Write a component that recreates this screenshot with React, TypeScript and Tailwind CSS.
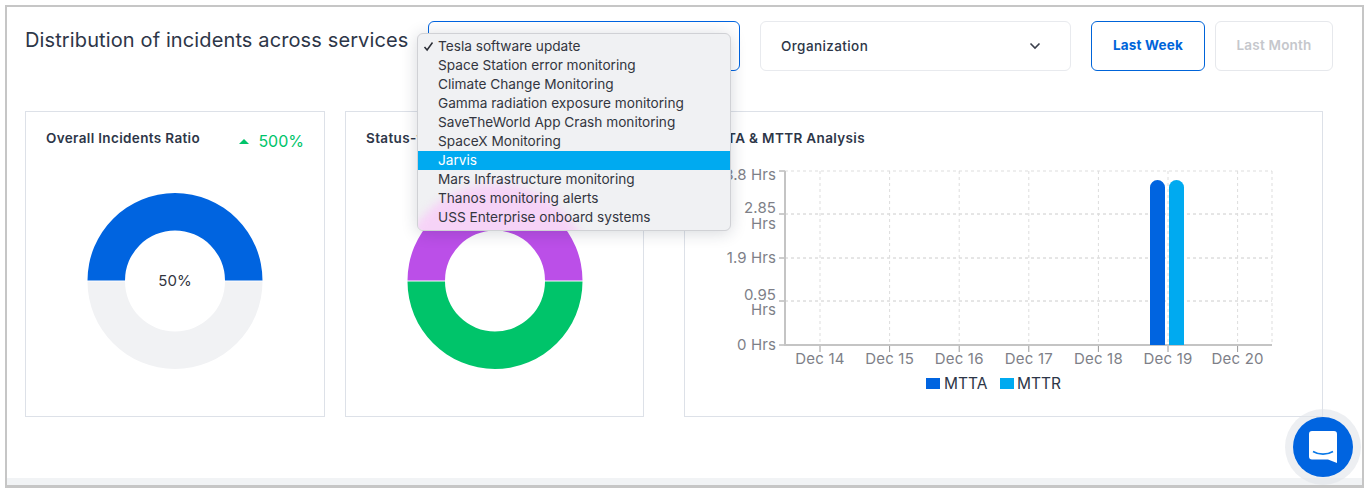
const SERVICES = [
  "Tesla software update",
  "Space Station error monitoring",
  "Climate Change Monitoring",
  "Gamma radiation exposure monitoring",
  "SaveTheWorld App Crash monitoring",
  "SpaceX Monitoring",
  "Jarvis",
  "Mars Infrastructure monitoring",
  "Thanos monitoring alerts",
  "USS Enterprise onboard systems",
];

const DAYS = ["Dec 14", "Dec 15", "Dec 16", "Dec 17", "Dec 18", "Dec 19", "Dec 20"];
const Y_LINES = [171, 214, 258, 301];
const Y_TICKS = [171, 214, 258, 301, 345];

function dayX(i: number) {
  return 820 + i * 69.6;
}

function Donut({ top, bottom }: { top: string; bottom: string }) {
  return (
    <svg width="176" height="176" viewBox="0 0 176 176" className="block">
      <path d="M0.5 87.5a87.5 87.5 0 0 1 175 0h-37.5a50 50 0 0 0-100 0z" fill={top} />
      <path d="M0.5 88.5a87.5 87.5 0 0 0 175 0h-37.5a50 50 0 0 1-100 0z" fill={bottom} />
    </svg>
  );
}

function ServiceMenu() {
  return (
    <div className="absolute left-[-12px] top-[11px] z-20 w-[314px] h-[198px] overflow-hidden rounded-[6px] border border-[#d0d1d5] bg-[#f0f1f3] pt-[3px] shadow-[0_2px_16px_rgba(30,40,60,0.18)] font-['Inter',sans-serif] text-[13.65px] text-[#33363f]">
      <div className="absolute left-[-20px] top-[150px] w-[194px] h-[194px] rounded-full bg-[#f6d3f7] blur-[4px]" />
      {SERVICES.map((name, i) => (
        <div
          key={name}
          className={`relative h-[19px] pl-[20px] leading-[19px] whitespace-nowrap ${name === "Jarvis" ? "bg-[#00aaf0] text-white" : ""}`}
        >
          {i === 0 && (
            <svg width="11" height="11" viewBox="0 0 11 11" className="absolute left-[5px] top-[4px]">
              <path d="M1.5 6l2.6 3L9.5 1.5" fill="none" stroke="#2b2e36" strokeWidth="1.5" />
            </svg>
          )}
          {name}
        </div>
      ))}
    </div>
  );
}

function Chart() {
  return (
    <svg width="637" height="250" viewBox="685 150 637 250" className="block font-['Inter',sans-serif]">
      {Y_LINES.map((y, i) => (
        <line key={y} x1="785" x2="1272" y1={y} y2={y} stroke={i === 0 ? "#dddddd" : "#cccccc"} strokeWidth="1" strokeDasharray="3 3" />
      ))}
      {DAYS.map((d, i) => (
        <line key={d} x1={dayX(i)} x2={dayX(i)} y1="171" y2="345" stroke="#dddddd" strokeWidth="1" strokeDasharray="3 3" />
      ))}
      <line x1="1272" x2="1272" y1="171" y2="345" stroke="#dddddd" strokeDasharray="3 3" />
      {Y_TICKS.map((y) => (
        <line key={y} x1="779" x2="785" y1={y} y2={y} stroke="#9a9a9a" />
      ))}
      {DAYS.map((d, i) => (
        <line key={d} x1={dayX(i)} x2={dayX(i)} y1="345" y2="352" stroke="#9a9a9a" />
      ))}
      <path d="M785 171V345H1272" fill="none" stroke="#c4c4c4" strokeWidth="2" />

      <path d="M1150 345V187.5a7.5 7.5 0 0 1 15 0V345z" fill="#0064e0" />
      <path d="M1169 345V187.5a7.5 7.5 0 0 1 15 0V345z" fill="#00aaf0" />

      <g fill="#7e7f88" fontSize="15" textAnchor="end" letterSpacing="0.1">
        <text x="776" y="180">3.8 Hrs</text>
        <text x="776" y="213">2.85</text>
        <text x="776" y="229">Hrs</text>
        <text x="776" y="263">1.9 Hrs</text>
        <text x="776" y="300">0.95</text>
        <text x="776" y="315">Hrs</text>
        <text x="776" y="350">0 Hrs</text>
      </g>
      <g fill="#7e7f88" fontSize="15" textAnchor="middle" letterSpacing="0.2">
        {DAYS.map((d, i) => (
          <text key={d} x={dayX(i)} y="364">{d}</text>
        ))}
      </g>
      <rect x="926" y="378" width="14" height="11" fill="#0064e0" />
      <rect x="1000" y="378" width="14" height="11" fill="#00aaf0" />
      <g fill="#2d3648" fontSize="15.5">
        <text x="944" y="389">MTTA</text>
        <text x="1017" y="389">MTTR</text>
      </g>
    </svg>
  );
}

export default function App() {
  return (
    <div className="relative w-[1368px] h-[492px] overflow-hidden bg-white pl-[5px] pt-[5px] font-['Inter',sans-serif]">
      <div className="flex flex-col w-[1359px] h-[483px] border-2 border-b-[3px] border-[#c6c6c6]">
        <div className="flex items-center pl-[18px] pt-[14px]">
          <h1 className="w-[403px] pb-[13px] text-[20px] leading-[28px] font-normal tracking-[0.12px] text-[#2d3648] whitespace-nowrap">
            Distribution of incidents across services
          </h1>
          <div className="relative w-[312px] h-[50px] rounded-[6px] border border-[#0064e0]">
            <ServiceMenu />
          </div>
          <button className="ml-[20px] flex items-center justify-between w-[311px] h-[50px] rounded-[6px] border border-[#e8eaee] pl-[20px] pr-[29px] text-[13.5px] font-medium tracking-[0.4px] text-[#2d3648]">
            Organization
            <svg width="12" height="8" viewBox="0 0 12 8">
              <path d="M1.5 1.5L6 6l4.5-4.5" fill="none" stroke="#3a3f4b" strokeWidth="1.6" />
            </svg>
          </button>
          <button className="ml-[20px] w-[114px] h-[50px] pb-[2px] rounded-[6px] border border-[#0064d9] text-[13.5px] font-bold tracking-[0.2px] text-[#0064d9]">
            Last Week
          </button>
          <button className="ml-[10px] w-[118px] h-[50px] pb-[2px] rounded-[6px] border border-[#e6e8ec] text-[13.5px] font-semibold tracking-[0.2px] text-[#c5c7cc]">
            Last Month
          </button>
        </div>

        <div className="flex pl-[18px] mt-[40px]">
          <section className="w-[300px] h-[306px] border border-[#dde1e8] pt-[17px] px-[20px]">
            <div className="flex items-start justify-between">
              <h2 className="text-[13.5px] leading-[18px] font-semibold tracking-[0.35px] text-[#2d3648]">Overall Incidents Ratio</h2>
              <div className="flex items-center gap-[9px] pt-[2px] pb-[1px] text-[16px] leading-[20px] text-[#00c46a]">
                <span className="w-0 h-0 border-x-[5px] border-b-[5px] border-x-transparent border-b-[#00c46a]" />
                500%
              </div>
            </div>
            <div className="relative mt-[41px] mx-auto w-[176px]">
              <Donut top="#0064e0" bottom="#f1f2f4" />
              <span className="absolute inset-0 flex items-center justify-center text-[15px] text-[#33363f]">50%</span>
            </div>
          </section>

          <section className="ml-[20px] w-[299px] h-[306px] border border-[#dde1e8] pt-[17px] px-[20px]">
            <h2 className="text-[13.5px] leading-[18px] font-semibold tracking-[0.35px] text-[#2d3648] whitespace-nowrap">Status-wise Incidents</h2>
            <div className="mt-[46px] mx-auto w-[176px]">
              <Donut top="#bb4fe8" bottom="#00c46a" />
            </div>
          </section>

          <section className="ml-[40px] w-[639px] h-[306px] border border-[#dde1e8] pt-[17px]">
            <h2 className="pl-[20px] text-[13.5px] leading-[18px] font-semibold tracking-[0.35px] text-[#2d3648]">MTTA &amp; MTTR Analysis</h2>
            <div className="mt-[3px]">
              <Chart />
            </div>
          </section>
        </div>

        <div className="mt-auto h-[7px] bg-[#f1f3f5]" />
      </div>

      <button className="absolute left-[1293px] top-[417px] z-30 flex items-center justify-center w-[60px] h-[60px] rounded-full bg-[#0064e0] shadow-[0_0_0_8px_rgba(225,228,233,0.6)]">
        <svg width="28" height="32" viewBox="0 0 28 32">
          <path d="M3 0H25a3 3 0 0 1 3 3V32L19 28.5H3a3 3 0 0 1-3-3V3a3 3 0 0 1 3-3z" fill="#fff" />
          <path d="M4 20.5c6 3.5 14 3.5 20 0" fill="none" stroke="#0a79e8" strokeWidth="1.6" />
        </svg>
      </button>
    </div>
  );
}
